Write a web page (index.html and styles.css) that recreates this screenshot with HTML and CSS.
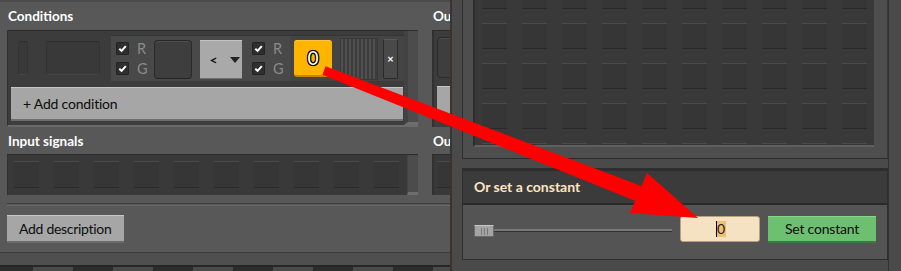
FILE: index.html
```html
<!DOCTYPE html>
<html>
<head>
<meta charset="utf-8">
<link rel="stylesheet" href="styles.css">
</head>
<body>
<div class="screen">
  <div class="left-col">
    <div class="win-left">
      <div class="win-left-inner">
        <div class="pair">
          <div class="col-main">
            <div class="label">Conditions</div>
            <div class="cond-box">
              <div class="cond-list">
                <div class="cond-row">
                  <div class="ghost"><span class="ghost-a"></span><span class="ghost-b"></span></div>
                  <div class="cond-body">
                    <div class="wires">
                      <div class="wire"><span class="cb"><svg viewBox="0 0 12 12"><path d="M2.5 6.2 L5 8.6 L9.6 3.4" /></svg></span><span class="wl">R</span></div>
                      <div class="wire"><span class="cb"><svg viewBox="0 0 12 12"><path d="M2.5 6.2 L5 8.6 L9.6 3.4" /></svg></span><span class="wl">G</span></div>
                    </div>
                    <div class="slot"></div>
                    <div class="cmp"><span class="cmp-op">&lt;</span><svg class="cmp-arrow" viewBox="0 0 10 6"><path d="M0 0 H10 L5 6 Z"/></svg></div>
                    <div class="wires wires-b">
                      <div class="wire"><span class="cb"><svg viewBox="0 0 12 12"><path d="M2.5 6.2 L5 8.6 L9.6 3.4" /></svg></span><span class="wl">R</span></div>
                      <div class="wire"><span class="cb"><svg viewBox="0 0 12 12"><path d="M2.5 6.2 L5 8.6 L9.6 3.4" /></svg></span><span class="wl">G</span></div>
                    </div>
                  </div>
                  <div class="cond-tail">
                    <div class="const">0</div>
                    <div class="stripes"></div>
                    <div class="xbtn">×</div>
                  </div>
                </div>
                <div class="add-cond">+ Add condition</div>
              </div>
              <div class="scroll"></div>
            </div>
          </div>
          <div class="col-out">
            <div class="label">Output</div>
            <div class="out-box">
              <div class="out-slot"></div>
              <div class="out-btn"></div>
            </div>
          </div>
        </div>
        <div class="pair">
          <div class="col-main">
            <div class="label label-2">Input signals</div>
            <div class="sig-box">
              <div class="sig-list">
                <span class="sig"></span><span class="sig"></span><span class="sig"></span><span class="sig"></span><span class="sig"></span>
                <span class="sig"></span><span class="sig"></span><span class="sig"></span><span class="sig"></span><span class="sig"></span>
              </div>
              <div class="scroll"></div>
            </div>
          </div>
          <div class="col-out">
            <div class="label label-2">Output signals</div>
            <div class="out-box2"><span class="sig"></span></div>
          </div>
        </div>
        <div class="sep"></div>
        <div class="desc-btn">Add description</div>
      </div>
    </div>
    <div class="ground"></div>
  </div>

  <div class="win-right">
    <div class="grid-panel">
      <div class="grid-area">
        <div class="grid-slots">
          <span></span><span></span><span></span><span></span><span></span><span></span><span></span><span></span><span></span><span></span>
          <span></span><span></span><span></span><span></span><span></span><span></span><span></span><span></span><span></span><span></span>
          <span></span><span></span><span></span><span></span><span></span><span></span><span></span><span></span><span></span><span></span>
          <span></span><span></span><span></span><span></span><span></span><span></span><span></span><span></span><span></span><span></span>
          <span></span><span></span><span></span><span></span><span></span><span></span><span></span><span></span><span></span><span></span>
        </div>
      </div>
    </div>
    <div class="const-section">
      <div class="const-head">Or set a constant</div>
      <div class="const-body">
        <div class="slider">
          <span class="handle"><i></i><i></i><i></i></span>
          <span class="track"></span>
        </div>
        <div class="num-input"><span class="caret"></span><span class="sel">0</span></div>
        <div class="set-btn">Set constant</div>
      </div>
    </div>
  </div>

  <svg class="arrow" viewBox="0 0 901 271" width="901" height="271">
    <polygon points="322.4,74.8 325.6,66.2 641.4,186.1 635.6,200.9" fill="#ff0000"/>
    <polygon points="647,173 630,213 698,218" fill="#ff0000"/>
  </svg>
</div>
</body>
</html>
```

FILE: styles.css
```css
* { box-sizing: border-box; }
html, body { margin: 0; padding: 0; }
body {
  width: 901px;
  height: 271px;
  overflow: hidden;
  background: #2c2c2c;
  font-family: "Lato", "Open Sans", sans-serif;
}
.screen {
  position: relative;
  display: flex;
  width: 901px;
  height: 271px;
  overflow: hidden;
}

/* ---------- left window ---------- */
.left-col {
  width: 450px;
  flex: none;
  display: flex;
  flex-direction: column;
  overflow: hidden;
}
.win-left {
  height: 267px;
  background: #4f4f4f;
  border-bottom: 2px solid #262626;
  padding-bottom: 12px;
}
.win-left-inner {
  height: 253px;
  background: #585858;
  border-top: 2px solid #4b4b4b;
  border-bottom: 1px solid #3a3a3a;
  padding-left: 7px;
  width: 460px;
}
.ground {
  flex: 1;
  background: linear-gradient(90deg, #4a4a4a 50%, #2c2c2c 50%);
  background-size: 80px 100%;
  background-position: 33px 0;
}
.pair {
  display: flex;
  gap: 14px;
}
.col-main { width: 411px; flex: none; }
.col-out { flex: 1; white-space: nowrap; }
.label {
  height: 28px;
  line-height: 29px;
  color: #ffffff;
  font-weight: 700;
  font-size: 13.5px;
  padding-left: 1px;
  white-space: nowrap;
}
.label-2 { height: 27px; line-height: 28px; }

.cond-box {
  height: 97px;
  display: flex;
  background: #3d3c3d;
  border-top: 1px solid #2d2c2d;
  border-left: 1px solid #323132;
  border-bottom: 2px solid #6a6a6a;
}
.cond-list {
  flex: 1;
  padding: 4px 0 0 1px;
}
.cond-row {
  display: flex;
  height: 46px;
}
.ghost {
  width: 102px;
  flex: none;
  display: flex;
  align-items: center;
  padding-left: 9px;
}
.ghost-a, .ghost-b {
  display: block;
  height: 34px;
  background: #3a393a;
  border: 1px solid #343334;
  border-top-color: #302f30;
  border-bottom-color: #464546;
  border-radius: 2px;
}
.ghost-a { width: 10px; }
.ghost-b { width: 54px; margin-left: 18px; }
.cond-body {
  width: 179px;
  flex: none;
  display: flex;
  align-items: center;
  background: #4a4949;
  border-top: 1px solid #363536;
  padding-left: 5px;
}
.wires {
  width: 38px;
  flex: none;
  display: flex;
  flex-direction: column;
  gap: 8px;
}
.wire {
  display: flex;
  align-items: center;
  height: 12px;
}
.cb {
  width: 13px;
  height: 13px;
  background: #2f2e2f;
  border: 1px solid #242324;
  border-radius: 1px;
  display: flex;
}
.cb svg { width: 11px; height: 11px; }
.cb path { fill: none; stroke: #ffffff; stroke-width: 2.2; }
.wl {
  margin-left: 8px;
  color: #8a8a8a;
  font-size: 14.5px;
  line-height: 12px;
}
.slot {
  width: 40px;
  height: 39px;
  margin-top: 2px;
  background: #3f3e3f;
  border: 1px solid #2a292a;
  border-bottom-color: #242324;
  border-radius: 4px;
  box-shadow: inset 0 1px 0 #4e4d4e;
}
.cmp {
  width: 43px;
  height: 39px;
  margin-left: 8px;
  margin-top: 2px;
  background: #a9a9a9;
  border-top: 1px solid #c4c4c4;
  border-bottom: 1px solid #6f6f6f;
  display: flex;
  align-items: center;
  padding-left: 9px;
}
.cmp-op { font-size: 14px; font-weight: 700; color: #111; line-height: 14px; }
.cmp-arrow { width: 10px; height: 6px; margin-left: 12px; }
.cmp-arrow path { fill: #222; }
.wires-b { margin-left: 10px; }

.cond-tail {
  width: 114px;
  flex: none;
  display: flex;
  background: #454444;
  border-top: 1px solid #363536;
  padding: 2px 6px 0 4px;
}
.const {
  width: 38px;
  height: 37px;
  margin-top: 2px;
  background: #ffb400;
  border-radius: 3px;
  border-bottom: 2px solid #c88600;
  border-top: 1px solid #ffc63a;
  text-align: center;
  font-size: 19px;
  line-height: 34px;
  color: #ffffff;
  text-shadow: 1px 0 0 #000, -1px 0 0 #000, 0 1px 0 #000, 0 -1px 0 #000,
    1px 1px 0 #000, -1px -1px 0 #000, 1px -1px 0 #000, -1px 1px 0 #000;
}
.stripes {
  width: 38px;
  height: 42px;
  margin-left: 8px;
  background: repeating-linear-gradient(90deg, #515050 0 2px, #3d3c3d 2px 4px);
  border: 1px solid #3a393a;
}
.xbtn {
  width: 15px;
  height: 40px;
  margin-left: 5px;
  margin-top: 1px;
  background: #4a4949;
  border: 1px solid #2c2b2c;
  border-top-color: #5a5959;
  border-radius: 2px;
  color: #ffffff;
  font-size: 11px;
  font-weight: 700;
  text-align: center;
  line-height: 37px;
}
.add-cond {
  margin: 6px 0 0 2px;
  width: 392px;
  height: 34px;
  background: #a6a6a6;
  border-top: 1px solid #c6c6c6;
  border-bottom: 2px solid #6e6e6e;
  color: #0d0d0d;
  font-size: 14px;
  letter-spacing: -0.2px;
  line-height: 31px;
  padding-left: 12px;
}
.scroll {
  width: 14px;
  flex: none;
  background: #4d4c4d;
  border-left: 4px solid #434243;
  border-bottom: 3px solid #6e6e6e;
}
.out-box {
  height: 97px;
  background: #3d3c3d;
  border-top: 1px solid #2d2c2d;
  border-left: 2px solid #323132;
  padding: 6px 0 0 3px;
}
.out-slot {
  width: 40px;
  height: 41px;
  background: #3f3e3f;
  border: 1px solid #2a292a;
  border-radius: 4px;
  box-shadow: inset 0 1px 0 #4e4d4e;
}
.out-btn {
  margin-top: 8px;
  width: 60px;
  height: 34px;
  background: #a6a6a6;
  border-top: 1px solid #c6c6c6;
}

.sig-box {
  height: 41px;
  display: flex;
  background: #3a393a;
  border-top: 1px solid #2d2c2d;
  border-left: 1px solid #323132;
}
.sig-list {
  flex: 1;
  display: flex;
  gap: 15px;
  padding: 6px 0 0 6px;
}
.sig {
  display: block;
  width: 25px;
  height: 27px;
  background: #373637;
  border-top: 1px solid #4b4a4b;
  border-bottom: 1px solid #2b2a2b;
}
.sig-box .scroll { width: 11px; border-left: 1px solid #444; }
.out-box2 {
  height: 41px;
  background: #3a393a;
  border-top: 1px solid #2d2c2d;
  border-left: 2px solid #323132;
  padding: 6px 0 0 3px;
}
.sep {
  margin-top: 8px;
  height: 3px;
  border-top: 1px solid #3f3e3f;
  border-bottom: 1px solid #6a6a6a;
  width: 460px;
}
.desc-btn {
  margin-top: 9px;
  width: 117px;
  height: 28px;
  background: #a6a6a6;
  border-top: 1px solid #c6c6c6;
  border-bottom: 2px solid #6a6a6a;
  color: #0d0d0d;
  font-size: 14px;
  letter-spacing: -0.3px;
  line-height: 25px;
  padding-left: 12px;
}

/* ---------- right window ---------- */
.win-right {
  flex: 1;
  background: #4a4a4a;
  border-left: 2px solid #3a3330;
  padding: 0 13px 0 10px;
  position: relative;
}
.win-right::after {
  content: "";
  position: absolute;
  top: 0;
  bottom: 0;
  right: 12px;
  width: 1px;
  background: #333;
}
.grid-panel {
  height: 159px;
  background: #4e4e4e;
  border-left: 1px solid #2f2f2f;
  border-right: 1px solid #3a3a3a;
  border-bottom: 1px solid #2a2a2a;
  padding: 0 13px 11px 10px;
}
.grid-area {
  height: 147px;
  background: #3a393a;
  border-left: 2px solid #2e2d2e;
  border-bottom: 2px solid #5f5f5f;
  overflow: hidden;
}
.grid-slots {
  margin-top: -17px;
  padding-left: 7px;
  display: grid;
  grid-template-columns: repeat(10, 25px);
  grid-auto-rows: 26px;
  column-gap: 15px;
  row-gap: 14px;
}
.grid-slots span {
  display: block;
  background: #373637;
  border-top: 1px solid #4c4b4c;
  border-bottom: 1px solid #2a292a;
}
.const-section {
  margin-top: 9px;
  height: 92px;
  background: #545454;
  border: 1px solid #2e2e2e;
  border-top: 3px solid #2e2e2e;
}
.const-head {
  height: 34px;
  background: #3c3b3c;
  border-bottom: 2px solid #2b2b2b;
  color: #ffe6c0;
  font-weight: 700;
  font-size: 14px;
  line-height: 32px;
  padding-left: 11px;
}
.const-body {
  display: flex;
  align-items: center;
  height: 51px;
  padding-left: 11px;
}
.slider {
  width: 198px;
  display: flex;
  align-items: center;
}
.handle {
  width: 20px;
  height: 12px;
  background: #a4a4a4;
  border: 1px solid #6a6a6a;
  border-top-color: #c8c8c8;
  border-radius: 1px;
  display: flex;
  justify-content: center;
  gap: 2px;
  padding-top: 2px;
}
.handle i {
  display: block;
  width: 1px;
  height: 7px;
  background: #777;
}
.track {
  flex: 1;
  height: 3px;
  background: #7a7a7a;
  border-bottom: 1px solid #333;
}
.num-input {
  margin-left: 8px;
  width: 80px;
  height: 26px;
  background: #f5e2c2;
  border: 1px solid #b9a17c;
  border-radius: 3px;
  display: flex;
  align-items: center;
  padding-left: 35px;
  margin-top: -3px;
}
.caret {
  width: 1px;
  height: 16px;
  background: #000;
}
.sel {
  background: #f0c070;
  font-size: 14px;
  line-height: 16px;
  color: #222;
  padding: 0 1px 0 0;
}
.set-btn {
  margin-left: 8px;
  width: 108px;
  height: 27px;
  background: #6cc070;
  border-top: 1px solid #8ad48c;
  border-bottom: 2px solid #3e7a42;
  color: #0d0d0d;
  font-size: 14px;
  letter-spacing: -0.2px;
  line-height: 24px;
  text-align: center;
  margin-top: -3px;
}

.arrow {
  position: absolute;
  left: 0;
  top: 0;
  pointer-events: none;
}
```
